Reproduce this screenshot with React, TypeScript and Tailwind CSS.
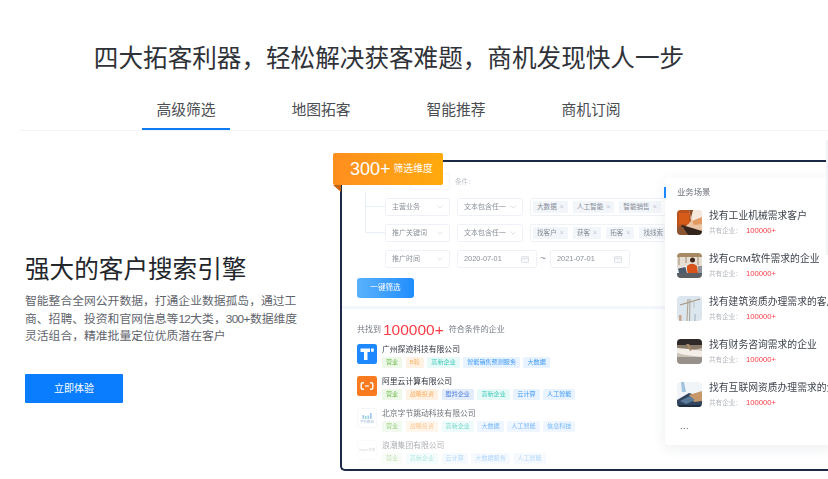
import { ReactNode } from 'react';

const CJK = 'font-["Liberation_Sans","Noto_Sans_CJK_SC",sans-serif]';

type TagColor = 'green' | 'orange' | 'teal' | 'blue' | 'indigo';

const tagClass: Record<TagColor, string> = {
  green: 'bg-[#edf8e8] text-[#6dbb4b]',
  orange: 'bg-[#fff2e5] text-[#f9b064]',
  teal: 'bg-[#e7faf8] text-[#3cc8ba]',
  blue: 'bg-[#e8f3ff] text-[#3a98f4]',
  indigo: 'bg-[#e3ecfb] text-[#5585df]',
};

const tabs = ['高级筛选', '地图拓客', '智能推荐', '商机订阅'];

const TLogo = () => (
  <svg viewBox="0 0 20 20" className="h-[20px] w-[20px]">
    <rect width="20" height="20" rx="2.5" fill="#1e88ff" />
    <path d="M3.5 4.5H13V8H10.5V16H7V8H3.5Z" fill="#fff" />
    <rect x="14" y="4.5" width="2.8" height="3.2" fill="#fff" />
  </svg>
);

const AliLogo = () => (
  <svg viewBox="0 0 20 20" className="h-[20px] w-[20px]">
    <rect width="20" height="20" rx="2.5" fill="#f97a1f" />
    <path d="M7 6.8H5.5Q4.2 6.8 4.2 8V12Q4.2 13.2 5.5 13.2H7M13 6.8H14.5Q15.8 6.8 15.8 8V12Q15.8 13.2 14.5 13.2H13" fill="none" stroke="#fff" strokeWidth="1.4" />
    <rect x="8" y="9.4" width="4" height="1.2" fill="#fff" />
  </svg>
);

const ByteLogo = () => (
  <div className="flex h-[20px] w-[20px] flex-col items-center justify-center rounded-[2px] border border-[#f3f4f6]">
    <svg viewBox="0 0 12 7" className="h-[7px] w-[12px]">
      <rect x="1.5" y="3" width="1.6" height="4" fill="#7fb2ea" />
      <rect x="4" y="4" width="1.6" height="3" fill="#6fd0c8" />
      <rect x="6.5" y="3.5" width="1.6" height="3.5" fill="#7fb2ea" />
      <rect x="9" y="1" width="1.6" height="6" fill="#6fb4ee" />
    </svg>
    <span className="mt-[1px] text-[3.4px] leading-[4px] text-[#6f93c4]">字节跳动</span>
  </div>
);

const InspurLogo = () => (
  <div className="flex h-[20px] w-[20px] items-center justify-center rounded-[2px] border border-[#f3f4f6]">
    <span className="text-[3.2px] leading-[4px] text-[#8d95a3]">inspur 浪潮</span>
  </div>
);

const companies: { name: string; logo: ReactNode; fade: string; tags: [string, TagColor][] }[] = [
  {
    name: '广州探迹科技有限公司',
    logo: <TLogo />,
    fade: '',
    tags: [['营业', 'green'], ['B轮', 'orange'], ['高新企业', 'teal'], ['智能销售预测服务', 'blue'], ['大数据', 'blue']],
  },
  {
    name: '阿里云计算有限公司',
    logo: <AliLogo />,
    fade: '',
    tags: [['营业', 'green'], ['战略投资', 'orange'], ['瞪羚企业', 'indigo'], ['高新企业', 'teal'], ['云计算', 'blue'], ['人工智能', 'blue']],
  },
  {
    name: '北京字节跳动科技有限公司',
    logo: <ByteLogo />,
    fade: 'opacity-70',
    tags: [['营业', 'green'], ['战略投资', 'orange'], ['高新企业', 'teal'], ['大数据', 'blue'], ['人工智能', 'blue'], ['信息科技', 'blue']],
  },
  {
    name: '浪潮集团有限公司',
    logo: <InspurLogo />,
    fade: 'opacity-40',
    tags: [['营业', 'green'], ['高新企业', 'teal'], ['云计算', 'blue'], ['大数据服务', 'blue'], ['人工智能', 'blue']],
  },
];

const Thumb1 = () => (
  <svg viewBox="0 0 25 25" className="h-full w-full">
    <rect width="25" height="25" fill="#e9c3a2" />
    <path d="M12 0H25V10L16 13Z" fill="#f5e9dd" />
    <path d="M0 0H12L14 11L8 17H0Z" fill="#b8521f" />
    <rect x="2" y="3" width="10" height="11" fill="#d65a18" />
    <path d="M5 15L25 21V25H11L3 19Z" fill="#33251e" />
    <path d="M0 17H6L11 25H0Z" fill="#8a5530" />
    <path d="M15 11L25 7V14L17 15Z" fill="#e39a62" />
    <path d="M12 0H16L14 8Z" fill="#8f4a20" />
  </svg>
);

const Thumb2 = () => (
  <svg viewBox="0 0 25 25" className="h-full w-full">
    <rect width="25" height="25" fill="#e6dfd3" />
    <path d="M0 0H25V4H0Z" fill="#a78a63" />
    <path d="M2 4V12M9 4V10M21 4V12" stroke="#8f7654" strokeWidth="0.8" />
    <circle cx="15.5" cy="7" r="2.5" fill="#3f281b" />
    <path d="M10 13Q15 8.5 20 13L21 20H10Z" fill="#d9541b" />
    <path d="M0 15L9 13L11 21H0Z" fill="#f5f6f7" />
    <path d="M1 15.5L8.5 14L10 20H2Z" fill="#4c5c6c" />
    <rect y="20" width="25" height="5" fill="#5a5f63" />
    <rect x="21" y="13" width="4" height="7" fill="#8f959a" />
  </svg>
);

const Thumb3 = () => (
  <svg viewBox="0 0 25 25" className="h-full w-full">
    <rect width="25" height="25" fill="#dbe6ee" />
    <path d="M3 9L23 3" stroke="#a5957d" strokeWidth="1.1" />
    <path d="M11 3L10 25M13 3L12.5 25" stroke="#a99a84" strokeWidth="0.9" />
    <path d="M17 6V12" stroke="#9c9c9c" strokeWidth="0.5" />
    <rect x="2" y="19" width="2.5" height="6" fill="#c9a68a" />
    <rect x="17" y="18" width="2" height="7" fill="#bccbd6" />
  </svg>
);

const Thumb4 = () => (
  <svg viewBox="0 0 25 25" className="h-full w-full">
    <rect width="25" height="25" fill="#c9c2b8" />
    <rect width="25" height="6" fill="#2f2a29" />
    <path d="M0 6H25V9L12 12L0 9Z" fill="#8b7b6a" />
    <path d="M0 9L12 10L25 12V18L8 16L0 14Z" fill="#f3efe8" />
    <path d="M9 5L13 12L15 11L12 5Z" fill="#a88a6c" />
    <rect y="18" width="25" height="7" fill="#98908a" />
  </svg>
);

const Thumb5 = () => (
  <svg viewBox="0 0 25 25" className="h-full w-full">
    <rect width="25" height="25" fill="#f2f5f7" />
    <path d="M4 0H7L9 10H5Z" fill="#9fc4de" />
    <path d="M0 18L12 11L25 15V25H0Z" fill="#31465e" />
    <path d="M12 13L25 9V19L17 20Z" fill="#c99868" />
    <path d="M3 19L13 14L18 18L9 22Z" fill="#5b7d9b" />
    <rect y="23" width="25" height="2" fill="#1f2f42" />
  </svg>
);

const scenarios: [string, ReactNode][] = [
  ['找有工业机械需求客户', <Thumb1 />],
  ['找有CRM软件需求的企业', <Thumb2 />],
  ['找有建筑资质办理需求的客户', <Thumb3 />],
  ['找有财务咨询需求的企业', <Thumb4 />],
  ['找有互联网资质办理需求的企业', <Thumb5 />],
];

const Chevron = () => (
  <svg viewBox="0 0 10 6" className="h-[4px] w-[6px] flex-none">
    <path d="M0.5 0.5L5 5L9.5 0.5" fill="none" stroke="#c5ccd6" strokeWidth="1" />
  </svg>
);

const CalendarIcon = () => (
  <svg viewBox="0 0 10 9" className="h-[7px] w-[8px] flex-none">
    <rect x="0.5" y="0.5" width="9" height="8" rx="1" fill="#f7f8fa" stroke="#d5dae2" />
    <path d="M0.5 3H9.5" stroke="#d5dae2" />
  </svg>
);

const Field = ({ text, width }: { text: string; width: string }) => (
  <div className={`flex h-[18px] flex-none items-center justify-between rounded-[2px] border border-[#eef2f8] pl-[6px] pr-[6px] text-[7px] text-[#8b919a] ${width}`}>
    <span className="whitespace-nowrap">{text}</span>
    <Chevron />
  </div>
);

const DateField = ({ text }: { text: string }) => (
  <div className="flex h-[18px] w-[80px] flex-none items-center justify-between rounded-[2px] border border-[#eef2f8] pl-[6px] pr-[7px] text-[7.4px] text-[#8b919a]">
    <span>{text}</span>
    <CalendarIcon />
  </div>
);

const ChipBox = ({ items }: { items: string[] }) => (
  <div className="flex h-[18px] flex-1 items-center gap-[5px] overflow-hidden rounded-[2px] border border-[#eef2f8] pl-[2px] text-[6.6px] text-[#858c96]">
    {items.map((t) => (
      <span key={t} className="flex h-[12px] flex-none items-center gap-[3px] rounded-[1px] bg-[#f2f5fa] px-[4px] whitespace-nowrap">
        {t}
        <span className="text-[7px] text-[#c2c8d1]">×</span>
      </span>
    ))}
  </div>
);

const ProductMock = () => (
  <div className="relative mt-[29px] h-[311px] flex-1 blur-[0.4px]">
    <div className="flex h-full flex-col overflow-hidden rounded-bl-[5px] rounded-tl-[3px] border-y-2 border-l-2 border-[#1b2947]">
      <div className="h-[147px] flex-none border-b-[3px] border-[#f3f6fb] pt-[11px]">
        <div className="ml-[68px] flex h-[17px] items-center gap-[5px]">
          <div className="h-[17px] w-[40px] rounded-[2px] border border-[#f3f5f9]" />
          <span className="text-[6.6px] text-[#c0c5cc]">条件：</span>
        </div>
        <div className="mt-[8px] flex gap-[7px] pr-[4px]">
          <div className="ml-[23px] -mr-[7px] -mt-[7px] h-[16px] w-[20px] flex-none border-b border-l border-[#e9eff7]" />
          <Field text="主营业务" width="w-[65px]" />
          <Field text="文本包含任一" width="w-[66px]" />
          <ChipBox items={['大数据', '人工智能', '智能销售']} />
        </div>
        <div className="mt-[8px] flex gap-[7px] pr-[4px]">
          <div className="ml-[23px] -mr-[7px] -mt-[17px] h-[26px] w-[20px] flex-none border-b border-l border-[#e9eff7]" />
          <Field text="推广关键词" width="w-[65px]" />
          <Field text="文本包含任一" width="w-[66px]" />
          <ChipBox items={['找客户', '获客', '拓客', '找线索']} />
        </div>
        <div className="mt-[8px] ml-[43px] flex items-center gap-[7px]">
          <Field text="推广时间" width="w-[65px]" />
          <DateField text="2020-07-01" />
          <span className="-ml-[4px] -mr-[4px] w-[7px] text-[10px] leading-none text-[#8b919a]">~</span>
          <DateField text="2021-07-01" />
        </div>
        <button className="mt-[10px] ml-[15px] flex h-[20px] w-[57px] items-center justify-center rounded-[3px] bg-gradient-to-r from-[#58b1fb] to-[#1f8dfd] text-[7.6px] text-white">
          一键筛选
        </button>
      </div>
      <div className="pl-[15px] pt-[11px]">
        <div className="flex h-[20px] items-center text-[8px] text-[#767c85]">
          共找到
          <span className="ml-[2px] mr-[5px] text-[15.5px] leading-[20px] text-[#fa3c46]">100000+</span>
          符合条件的企业
        </div>
        <div className="mt-[4px] flex flex-col gap-[12px]">
          {companies.map((c) => (
            <div key={c.name} className={`flex h-[20px] gap-[5px] ${c.fade}`}>
              <div className="flex-none">{c.logo}</div>
              <div className="mt-[1px]">
                <div className="h-[10px] text-[7.8px] leading-[10px] text-[#2d333d]">{c.name}</div>
                <div className="mt-[2px] flex gap-[3.5px]">
                  {c.tags.map(([t, color]) => (
                    <span key={t} className={`flex h-[11px] items-center rounded-[1.5px] px-[4px] text-[6.1px] leading-none whitespace-nowrap ${tagClass[color]}`}>
                      {t}
                    </span>
                  ))}
                </div>
              </div>
            </div>
          ))}
        </div>
      </div>
    </div>

    {/* corner badge sits over the frame */}
    <div className="absolute -left-[7px] -top-[7px] flex h-[32px] w-[110px] items-center rounded-[2px] bg-gradient-to-r from-[#ff8e1e] to-[#ffaa0c] pl-[17px] text-white">
      <span className="text-[18px] leading-none">300+</span>
      <span className="ml-[3px] text-[9.8px] leading-none">筛选维度</span>
    </div>
    <svg viewBox="0 0 8 7" className="absolute -left-[7px] top-[25px] h-[7px] w-[8px]">
      <path d="M0 0H8V7Z" fill="#c9620c" />
    </svg>

    {/* scenario card floats over the filter rows */}
    <div className="absolute left-[325px] top-[18px] h-[267px] w-[170px] rounded-[4px] bg-white shadow-[0_3px_14px_rgba(30,50,90,0.09)]">
      <div className="absolute -left-[1px] top-[9px] h-[11px] w-[2px] bg-[#1e88ff]" />
      <div className="pl-[12px] pt-[9px] text-[8.4px] leading-[11px] text-[#6b7078]">业务场景</div>
      <div className="mt-[12px] flex flex-col gap-[18px] pl-[12px]">
        {scenarios.map(([title, thumb]) => (
          <div key={title} className="flex h-[25px] gap-[7px]">
            <div className="h-[25px] w-[25px] flex-none overflow-hidden rounded-[4px]">{thumb}</div>
            <div className="min-w-0">
              <div className="-mt-[1px] h-[13px] text-[9.8px] leading-[13px] whitespace-nowrap text-[#3e444e]">{title}</div>
              <div className="mt-[4px] flex h-[10px] items-center text-[6.6px] text-[#b3b7bd]">
                共有企业：
                <span className="ml-[4px] text-[7.7px] text-[#fa3c46]">100000+</span>
              </div>
            </div>
          </div>
        ))}
      </div>
      <div className="mt-[15px] pl-[15px] text-[9px] leading-[9px] tracking-[0.5px] text-[#4a4f57]">...</div>
    </div>
    <div className="absolute -top-[20px] right-0 h-[115px] w-[2px] bg-[#f1f3f6]" />
  </div>
);

export default function App() {
  return (
    <div className={`h-[479px] w-[828px] overflow-hidden bg-white ${CJK}`}>
      <div className="pt-[41px]">
        <h1 className="w-[778px] text-center text-[24.6px] leading-[36px] font-normal whitespace-nowrap text-[#2f3238]">
          四大拓客利器，轻松解决获客难题，商机发现快人一步
        </h1>
        <div className="mt-[18px] flex w-[776px] justify-center">
          {tabs.map((t, i) => (
            <div key={t} className="flex w-[135px] justify-center">
              <div className={`flex h-[35px] w-[88px] items-start justify-center border-b-2 pl-[1px] pt-[4px] text-[14.8px] leading-[22px] text-[#4a4d52] ${i === 0 ? 'border-[#0f7cf3]' : 'border-transparent'}`}>
                {t}
              </div>
            </div>
          ))}
        </div>
      </div>
      <div className="ml-[20px] h-px bg-[#f1f4f8]" />

      <div className="flex">
        <div className="w-[340px] flex-none pl-[25px] pt-[123px]">
          <h2 className="text-[24.6px] leading-[32px] font-normal whitespace-nowrap text-[#23262b]">强大的客户搜索引擎</h2>
          <p className="mt-[7px] w-[279px] text-[11.8px] leading-[17.5px] text-[#5f646c]">
            智能整合全网公开数据，打通企业数据孤岛，通过工商、招聘、投资和官网信息等<span className="tracking-[-0.6px]">12</span>大类，<span className="tracking-[-0.6px]">300+</span>数据维度灵活组合，精准批量定位优质潜在客户
          </p>
          <button className="mt-[28px] flex h-[29px] w-[98px] items-center justify-center rounded-[1px] bg-[#0a7dff] text-[10px] text-white">
            立即体验
          </button>
        </div>
        <ProductMock />
      </div>
    </div>
  );
}
